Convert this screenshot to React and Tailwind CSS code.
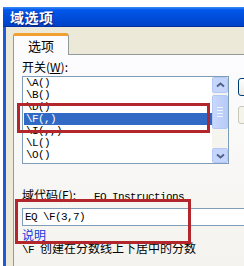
import React from 'react';

const mono = '[font-family:"Liberation_Mono","Noto_Sans_CJK_SC",monospace]';
const cjk = '[font-family:"Noto_Sans_CJK_SC","Liberation_Sans",sans-serif]';

const switches = ['\\A()', '\\B()', '\\D()', '\\F(,)', '\\I(,,)', '\\L()', '\\O()'];

const Chevron = ({ down }) => (
  <svg width="9" height="6" viewBox="0 0 9 6">
    <path
      d={down ? 'M1 1.5 L4.5 4.5 L8 1.5' : 'M1 4.5 L4.5 1.5 L8 4.5'}
      fill="none"
      stroke="#4D6185"
      strokeWidth="1.8"
    />
  </svg>
);

const App = () => {
  return (
    <div className={`relative w-[244px] h-[266px] overflow-hidden bg-white pl-[3px] pt-[7px] ${cjk}`}>
      <div className="flex flex-col h-full">
        {/* Title bar */}
        <div className="h-[20px] flex items-center pl-[7px] bg-linear-to-b from-[#3C8DF7] via-[#0157EB] via-15% to-[#0041C8] border-b border-[#0030A0]">
          <span className="text-white font-bold text-[14px] leading-none tracking-[0.5px] [text-shadow:1px_1px_#0A1F7A]">域选项</span>
        </div>

        {/* Body */}
        <div className="flex-1 flex flex-col bg-[#ECE9D8] border-l-[3px] border-[#1A5CDB] pl-[7px] pt-[6px]">
          {/* Tab */}
          <div className="flex">
            <div className="relative z-10 -mb-px w-[56px] h-[22px] flex items-center justify-center bg-[#FCFCFE] border-x border-[#919B9C] border-t-[3px] border-t-[#F0A030] rounded-t-[3px]">
              <span className="text-[13px] leading-none text-black">选项</span>
            </div>
          </div>

          {/* Tab panel */}
          <div className="flex-1 flex flex-col border-l border-t border-[#919B9C] bg-linear-to-b from-[#FCFCFE] to-[#F4F3EE] pl-[8px] pt-[5px]">
            <div className="text-[12px] leading-[14px] text-black">
              开关(<span className="underline">W</span>):
            </div>

            <div className="flex items-start gap-[9px] mt-[2px]">
              {/* List box */}
              <div className="w-[207px] h-[88px] shrink-0 flex border border-[#7F9DB9] bg-white">
                <div className="flex-1 flex flex-col">
                  {switches.map((s, i) => (
                    <div
                      key={i}
                      className={`h-[12px] ml-px pl-[2px] flex items-center text-[11px] leading-[12px] tracking-[-0.6px] ${mono} ${
                        i === 3 ? 'bg-[#316AC5] text-white' : 'text-black'
                      }`}
                    >
                      {s}
                    </div>
                  ))}
                </div>
                {/* Scrollbar */}
                <div className="w-[16px] flex flex-col bg-[#F5F4EF]">
                  <div className="h-[16px] flex items-center justify-center rounded-[2px] border border-[#B4C8F6] bg-[#C5D5FC]">
                    <Chevron />
                  </div>
                  <div className="h-[34px] mt-[2px] flex flex-col items-center justify-center gap-[2px] rounded-[2px] border border-[#B4C8F6] bg-linear-to-r from-[#C9D8FC] to-[#B7CBF8]">
                    <div className="w-[6px] h-px bg-[#EEF4FE]" />
                    <div className="w-[6px] h-px bg-[#EEF4FE]" />
                    <div className="w-[6px] h-px bg-[#EEF4FE]" />
                    <div className="w-[6px] h-px bg-[#EEF4FE]" />
                  </div>
                  <div className="flex-1" />
                  <div className="h-[15px] flex items-center justify-center rounded-[2px] border border-[#B4C8F6] bg-[#C5D5FC]">
                    <Chevron down />
                  </div>
                </div>
              </div>

              {/* Side buttons */}
              <div className="flex flex-col gap-[10px] mt-[2px]">
                <div className="w-[40px] h-[18px] rounded-[3px] border border-[#003C74] bg-linear-to-b from-white to-[#ECEBE6]" />
                <div className="w-[40px] h-[18px] rounded-[3px] border border-[#C9C7BA] bg-[#F5F4EA]" />
              </div>
            </div>

            <div className="mt-[24px] text-[12px] leading-[14px] text-black whitespace-pre">
              域代码(F):<span className={`text-[11px] tracking-[-0.6px] ${mono}`}>   EQ Instructions</span>
            </div>

            <div className="mt-[4px] w-[240px] h-[18px] shrink-0 flex items-center pl-[2px] border border-[#7F9DB9] bg-white">
              <span className={`text-[11px] leading-none tracking-[-0.6px] text-black ${mono}`}>EQ \F(3,7)</span>
            </div>

            <div className="mt-[2px] text-[12px] leading-[13px] text-[#1438D8]">说明</div>
            <div className="text-[12px] leading-[13px] text-black whitespace-pre">
              <span className={`text-[11px] tracking-[-0.6px] ${mono}`}>\F </span>创建在分数线上下居中的分数
            </div>
          </div>
        </div>
      </div>

      {/* Red highlight frames */}
      <div className="absolute left-[17px] top-[103px] w-[193px] h-[30px] border-[3px] border-[#B3262B]" />
      <div className="absolute left-[15px] top-[199px] w-[176px] h-[45px] border-[3px] border-[#B3262B]" />
    </div>
  );
};

export default App;
